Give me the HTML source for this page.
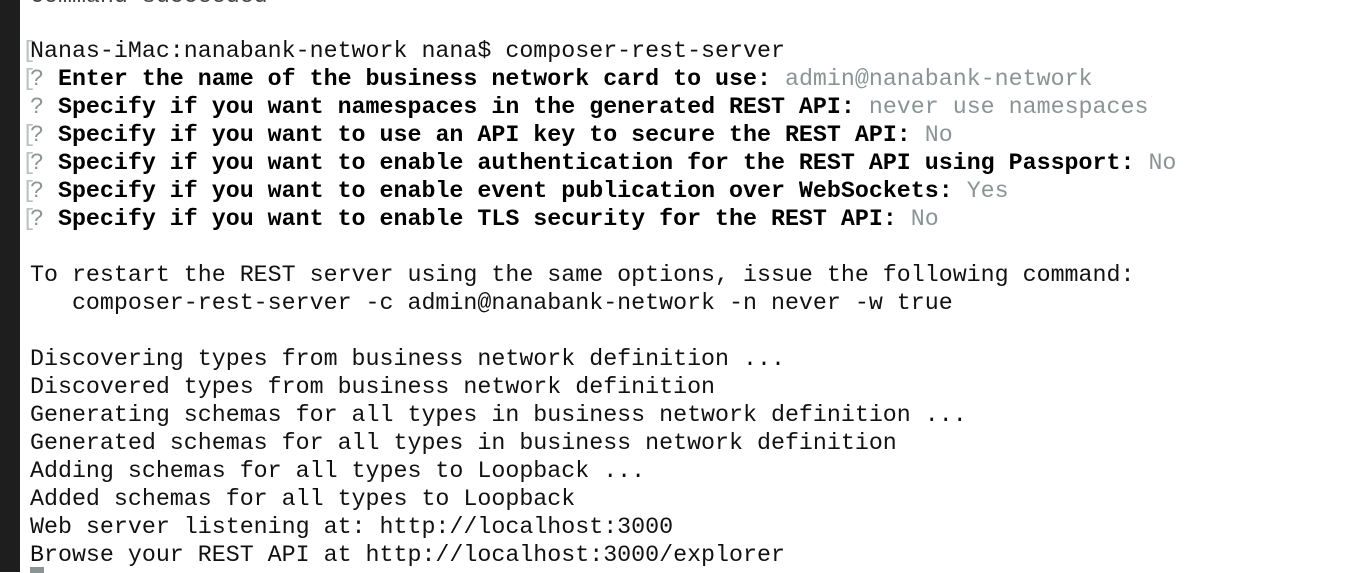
<!DOCTYPE html>
<html><head><meta charset="utf-8"><style>
html,body{margin:0;padding:0;width:1356px;height:572px;overflow:hidden;background:#fff}
.strip{position:absolute;left:0;top:0;width:20px;height:572px;background:#1e1e1e}
pre{position:absolute;left:30px;top:-19px;margin:0;font-family:"Liberation Mono",monospace;font-size:23.3px;line-height:28px;color:#111}
b{font-weight:bold;color:#000}
.g{color:#8a9494}
.br{position:absolute;left:22px;font-family:"Liberation Mono",monospace;font-size:23px;line-height:28px;color:#b8c0c0}
.cur{position:absolute;left:30px;top:567px;width:14px;height:6px;background:#8a9494}
</style></head><body>
<div class="strip"></div>
<div class="br" style="top:37px">[</div>
<div class="br" style="top:65px">[</div>
<div class="br" style="top:121px">[</div>
<div class="br" style="top:149px">[</div>
<div class="br" style="top:177px">[</div>
<div class="br" style="top:205px">[</div>
<pre><span style="color:#444;position:relative;top:1px">Command succeeded</span>

Nanas-iMac:nanabank-network nana$ composer-rest-server
<span class="g">?</span> <b>Enter the name of the business network card to use:</b> <span class="g">admin@nanabank-network</span>
<span class="g">?</span> <b>Specify if you want namespaces in the generated REST API:</b> <span class="g">never use namespaces</span>
<span class="g">?</span> <b>Specify if you want to use an API key to secure the REST API:</b> <span class="g">No</span>
<span class="g">?</span> <b>Specify if you want to enable authentication for the REST API using Passport:</b> <span class="g">No</span>
<span class="g">?</span> <b>Specify if you want to enable event publication over WebSockets:</b> <span class="g">Yes</span>
<span class="g">?</span> <b>Specify if you want to enable TLS security for the REST API:</b> <span class="g">No</span>

To restart the REST server using the same options, issue the following command:
   composer-rest-server -c admin@nanabank-network -n never -w true

Discovering types from business network definition ...
Discovered types from business network definition
Generating schemas for all types in business network definition ...
Generated schemas for all types in business network definition
Adding schemas for all types to Loopback ...
Added schemas for all types to Loopback
Web server listening at: http://localhost:3000
Browse your REST API at http://localhost:3000/explorer</pre>
<div class="cur"></div>
</body></html>
